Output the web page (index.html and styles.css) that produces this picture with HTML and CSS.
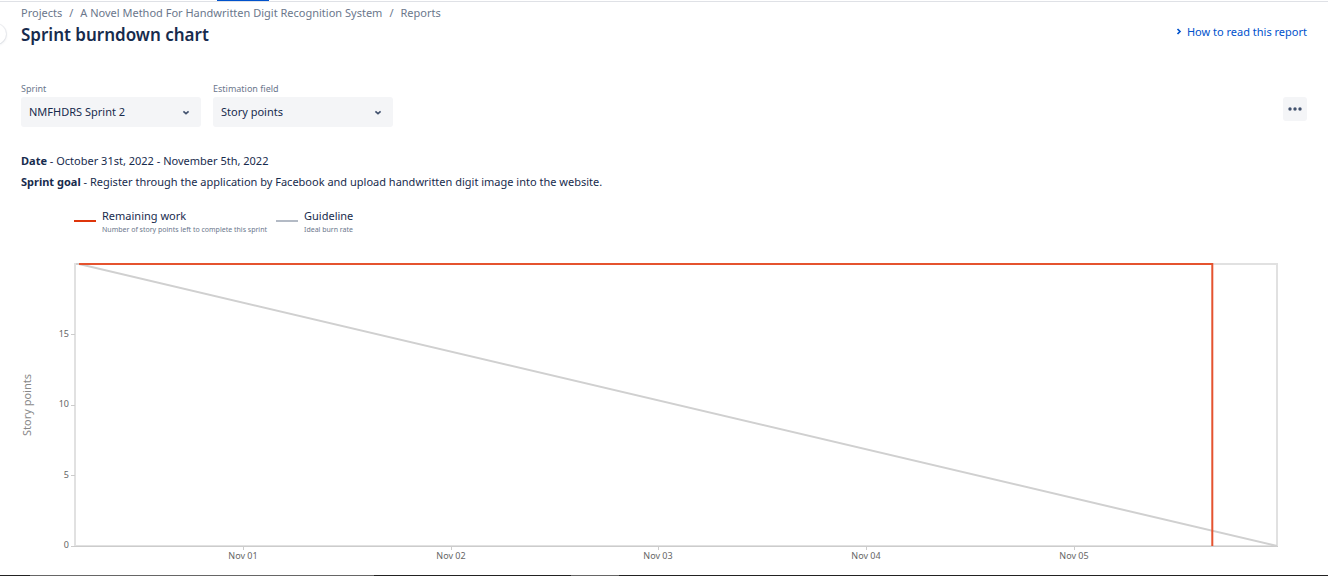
FILE: index.html
```html
<!DOCTYPE html>
<html lang="en">
<head>
<meta charset="utf-8">
<meta name="viewport" content="width=device-width, initial-scale=1">
<title>Sprint burndown chart</title>
<link rel="stylesheet" href="styles.css">
</head>
<body>
<div class="topbar"><span class="active-tab"></span></div>
<button class="sidebar-toggle" type="button" aria-label="Expand sidebar"></button>
<main class="page">
  <nav class="breadcrumbs" aria-label="Breadcrumbs">
    <a href="#">Projects</a><span>/</span><a href="#">A Novel Method For Handwritten Digit Recognition System</a><span>/</span><a href="#">Reports</a>
  </nav>
  <header class="title-row">
    <h1>Sprint burndown chart</h1>
    <a class="help" href="#"><svg width="6" height="8" viewBox="0 0 6 8"><path d="M1.5 1 4 3.5 1.5 6" fill="none" stroke="#0052cc" stroke-width="1.7"/></svg>How to read this report</a>
  </header>
  <div class="controls">
    <div class="field">
      <label for="sprint">Sprint</label>
      <div class="select-box">
        <select id="sprint"><option>NMFHDRS Sprint 2</option></select>
        <svg class="chevron" width="8" height="6" viewBox="0 0 8 6"><path d="M1.4 1.4 4 3.6 6.6 1.4" fill="none" stroke="#42526e" stroke-width="1.7"/></svg>
      </div>
    </div>
    <div class="field">
      <label for="estimation">Estimation field</label>
      <div class="select-box">
        <select id="estimation"><option>Story points</option></select>
        <svg class="chevron" width="8" height="6" viewBox="0 0 8 6"><path d="M1.4 1.4 4 3.6 6.6 1.4" fill="none" stroke="#42526e" stroke-width="1.7"/></svg>
      </div>
    </div>
    <button class="more" type="button" aria-label="More actions"><svg width="14" height="4" viewBox="0 0 14 4" fill="#42526e"><circle cx="2" cy="2" r="1.7"/><circle cx="7" cy="2" r="1.7"/><circle cx="12" cy="2" r="1.7"/></svg></button>
  </div>
  <section class="details">
    <p><strong>Date</strong> - October 31st, 2022 - November 5th, 2022</p>
    <p><strong>Sprint goal</strong> - Register through the application by Facebook and upload handwritten digit image into the website.</p>
  </section>
  <ul class="legend">
    <li><span class="swatch remaining"></span><div><div class="name">Remaining work</div><div class="note">Number of story points left to complete this sprint</div></div></li>
    <li><span class="swatch guideline"></span><div><div class="name">Guideline</div><div class="note">Ideal burn rate</div></div></li>
  </ul>
</main>
<svg class="chart" viewBox="0 0 1328 312" role="img" aria-label="Sprint burndown chart">
  <rect class="frame" x="75" y="12" width="1202" height="282"/>
  <path class="axis" d="M72 294.5H1278"/>
  <path class="tick" d="M71 82.5h4M71 153.5h4M71 223.5h4M71 294.5h4M243.5 294v4M451.5 294v4M658.5 294v4M866.5 294v4M1074.5 294v4"/>
  <path class="ideal" d="M76 12H79L1277 294"/>
  <path class="work" d="M79 12H1212.3V294"/>
  <g class="y-labels">
    <text x="69" y="85">15</text><text x="69" y="155">10</text><text x="69" y="226">5</text><text x="69" y="296">0</text>
  </g>
  <g class="x-labels">
    <text x="243" y="307">Nov 01</text><text x="451" y="307">Nov 02</text><text x="658" y="307">Nov 03</text><text x="866" y="307">Nov 04</text><text x="1074" y="307">Nov 05</text>
  </g>
  <text class="axis-title" transform="translate(31 153) rotate(-90)">Story points</text>
</svg>
<footer class="bottom-edge"></footer>
</body>
</html>
```
FILE: styles.css
```css
* { box-sizing: border-box; }
body {
  margin: 0;
  min-height: 100vh;
  display: flex;
  flex-direction: column;
  overflow-x: hidden;
  background: #fff;
  color: #172b4d;
  font: 11px/16px "Noto Sans", "Open Sans", sans-serif;
}
a { color: inherit; text-decoration: none; }
.topbar { height: 2px; border-bottom: 1px solid #dfe1e6; padding-left: 217px; }
.active-tab { display: block; width: 52px; height: 1px; background: #0052cc; }
.sidebar-toggle {
  position: absolute; left: -14px; top: 24px; width: 20px; height: 20px; padding: 0;
  border: 0; border-radius: 50%; background: #fff;
  box-shadow: 0 0 0 1px #091e420f, 0 1px 3px #091e421f;
}
.page { padding: 3px 21px 0; }
.breadcrumbs { display: flex; gap: 7px; color: #6b778c; }
.title-row { display: flex; justify-content: space-between; }
h1 { margin: 2px 0 0; font-size: 17px; line-height: 24px; font-weight: 600; }
.help { display: flex; align-items: center; gap: 5px; height: 22px; color: #0052cc; }
.controls { display: flex; gap: 12px; margin-top: 35px; }
.field { width: 180px; }
.field label { display: block; height: 15px; font-size: 9px; line-height: 14px; color: #6b778c; }
.select-box { position: relative; }
select {
  display: block; appearance: none; width: 100%; height: 30px; padding: 0 24px 0 8px;
  border: 0; border-radius: 3px; background: #f4f5f7; color: inherit; font: inherit;
}
.chevron { position: absolute; right: 11px; top: 13px; }
.more {
  display: flex; align-items: center; justify-content: center; margin: 15px 0 0 auto;
  width: 24px; height: 24px; padding: 0; border: 0; border-radius: 3px; background: #f4f5f7;
}
.details { margin-top: 26px; }
.details p { margin: 0 0 5px; }
.legend { display: flex; gap: 9px; margin: 0; padding: 13px 0 0 53px; list-style: none; }
.legend li { display: flex; gap: 6px; }
.swatch { width: 22px; height: 2px; margin-top: 12px; }
.remaining { background: #de350b; }
.guideline { background: #b3bac5; }
.name { line-height: 15px; }
.note { font-size: 7px; line-height: 14px; color: #6b778c; }
.chart { display: block; width: 100%; margin-top: 15px; font-size: 9px; fill: #666; }
.frame { fill: none; stroke: #e1e1e1; stroke-width: 2; }
.axis, .tick { fill: none; stroke: #ccc; }
.ideal { fill: none; stroke: #d0d0d0; stroke-width: 2; }
.work { fill: none; stroke: #e5532f; stroke-width: 2; }
.y-labels { text-anchor: end; }
.x-labels, .axis-title { text-anchor: middle; }
.axis-title { font-size: 11px; fill: #888; }
.bottom-edge {
  height: 1px; margin-top: auto;
  background: linear-gradient(90deg, #222 30px, #666 30px 374px, #222 374px 571px, #666 571px 619px, #222 619px);
}
```
